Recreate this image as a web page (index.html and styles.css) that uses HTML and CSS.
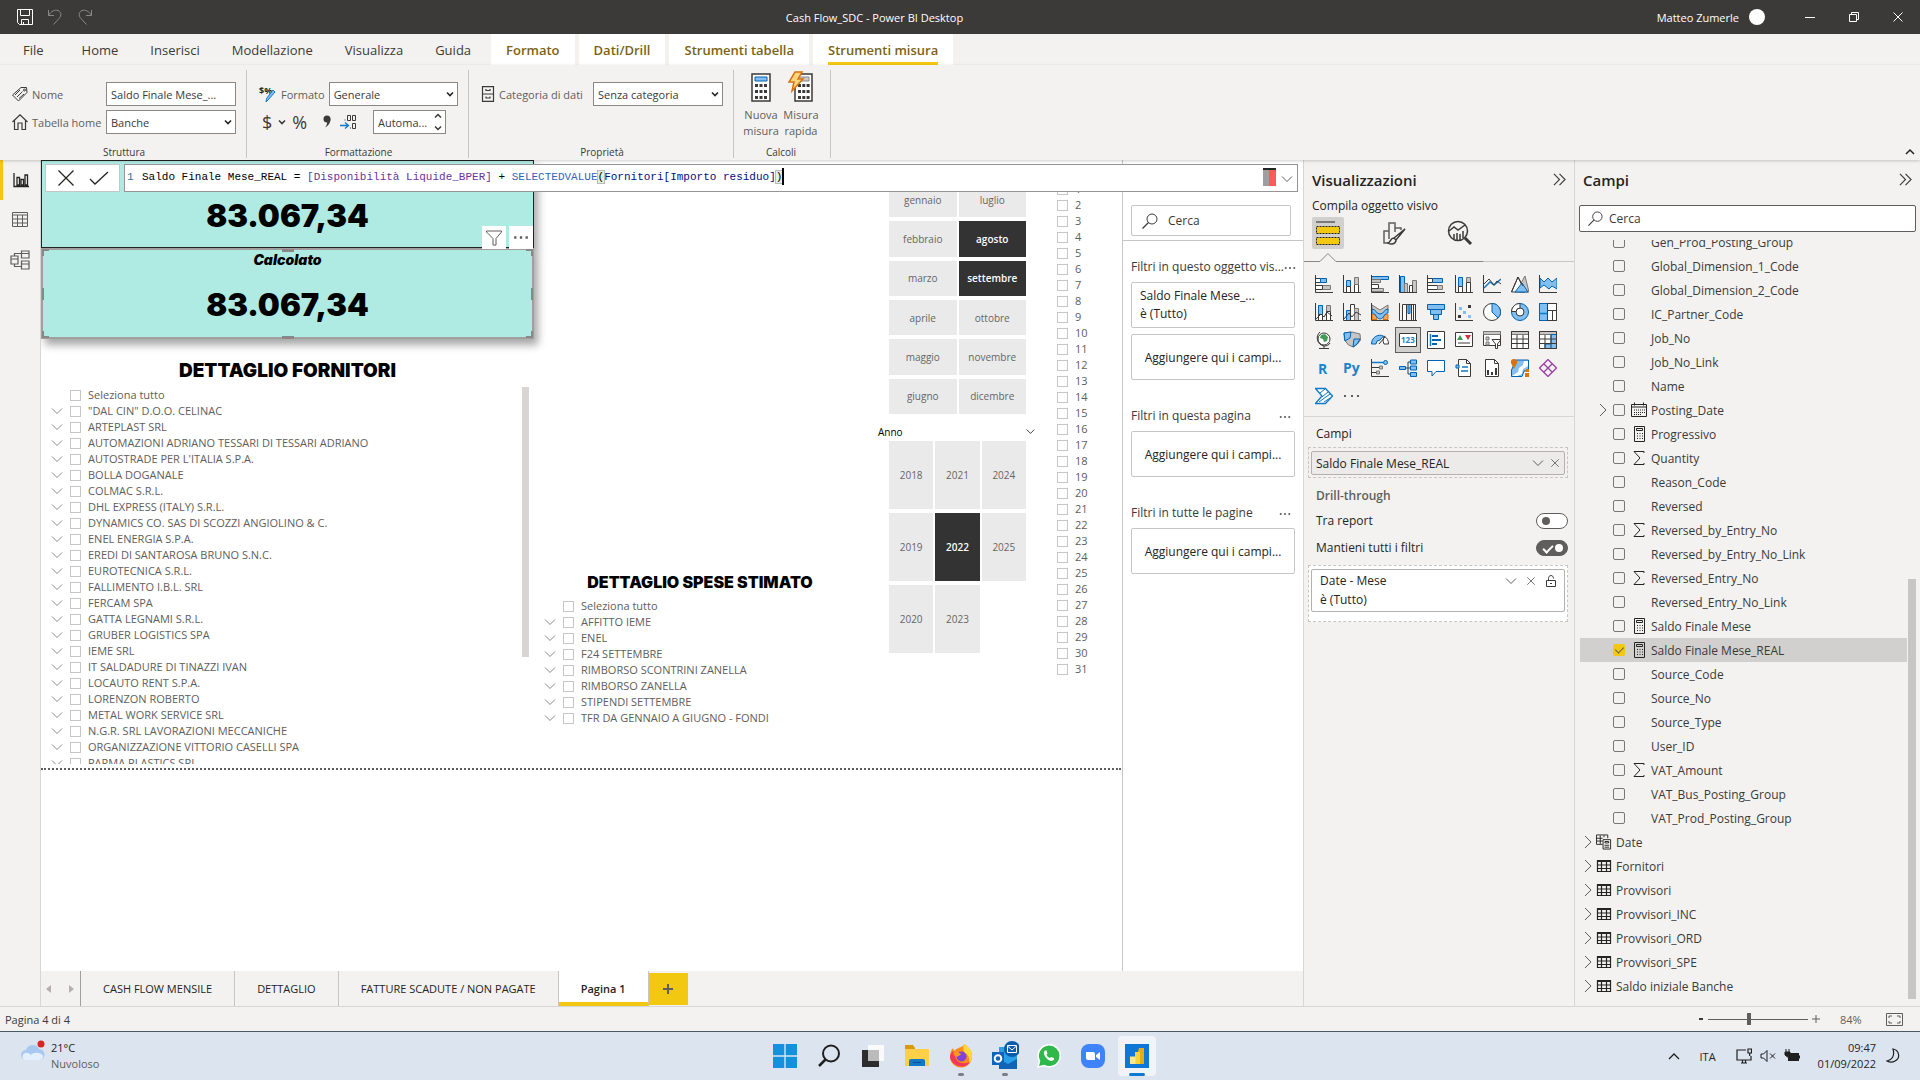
FILE: index.html
```html
<!DOCTYPE html>
<html lang="it">
<head>
<meta charset="utf-8">
<title>Cash Flow_SDC - Power BI Desktop</title>
<link rel="stylesheet" href="styles.css">
</head>
<body>
<svg class="defs" aria-hidden="true">
  <symbol id="down" viewBox="0 0 12 12"><path d="M1 3.500l5 5 5-5" fill="none" stroke="currentColor"/></symbol>
  <symbol id="right" viewBox="0 0 8 14"><path d="M1 1l6 6-6 6" fill="none" stroke="currentColor"/></symbol>
  <symbol id="caret" viewBox="0 0 8 8"><path d="M1 2.500l3 3 3-3" fill="none" stroke="currentColor" stroke-width="1.600"/></symbol>
  <symbol id="cross" viewBox="0 0 12 12"><path d="M1.500 1.500l9 9M10.500 1.500l-9 9" fill="none" stroke="currentColor"/></symbol>
  <symbol id="dots" viewBox="0 0 14 4"><path d="M1 1h2v2H1zM6 1h2v2H6zM11 1h2v2h-2z" fill="currentColor"/></symbol>
  <symbol id="find" viewBox="0 0 16 16"><circle cx="10" cy="6" r="5" fill="none" stroke="currentColor"/><path d="M6.500 9.500L.5 15.500" stroke="currentColor" stroke-width="1.200"/></symbol>
  <symbol id="fold" viewBox="0 0 14 14"><path d="M1 1l6 6-6 6M7 1l6 6-6 6" fill="none" stroke="currentColor" stroke-width="1.200"/></symbol>
  <symbol id="sum" viewBox="0 0 16 16"><path d="M13 3V1.500H3L9 8l-6 6.500h10V13" fill="none" stroke="#252423"/></symbol>
  <symbol id="calc" viewBox="0 0 16 16"><path d="M3.500.5h10v15h-10zM5.500 2.500h6v2h-6z" fill="none" stroke="#252423"/><path d="M6 7.500h6M6 10h6M6 12.500h6" stroke="#252423" stroke-dasharray="1 1.500"/></symbol>
  <symbol id="cal" viewBox="0 0 16 16"><path d="M.5 2.500h15v12H.5zM.5 5h15M3.500.5v3M12.500.5v3" fill="none" stroke="#252423"/><path d="M3 8h11M3 10.500h11M3 12.500h8" stroke="#252423" stroke-dasharray="1 1"/></symbol>
  <symbol id="table" viewBox="0 0 16 16"><path d="M1.500 2.500h13v11h-13zM1.500 7h13M1.500 10.500h13M5.500 4v10M10.500 4v10" fill="none" stroke="#252423" stroke-width="1.200"/><path d="M1 2h14v2H1z" fill="#252423"/></symbol>
</svg>

<header class="titlebar">
  <div class="quick">
    <button aria-label="Salva"><svg width="16" height="16" viewBox="0 0 16 16" fill="none" stroke="#fff"><path d="M.5.500h15v15h-13l-2-2zM3.500.500v6h9v-6M4.500 15.500v-5h7v5M6.500 13v2"/></svg></button>
    <button aria-label="Annulla"><svg width="16" height="16" viewBox="0 0 16 16" fill="none" stroke="#8a8886"><path d="M1.500 1v5.500H7M1.500 6.500C4 2 8 .5 11 1.500s4 5 1 8L6.500 15.500"/></svg></button>
    <button aria-label="Ripeti"><svg width="16" height="16" viewBox="0 0 16 16" fill="none" stroke="#8a8886"><path d="M14.500 1v5.500H9M14.500 6.500C12 2 8 .5 5 1.500s-4 5-1 8l5.500 6"/></svg></button>
  </div>
  <h1>Cash Flow_SDC - Power BI Desktop</h1>
  <div class="account">
    <span>Matteo Zumerle</span><i class="avatar"></i>
    <div class="window-buttons">
      <button aria-label="Riduci"><svg width="12" height="12" viewBox="0 0 12 12"><path d="M1 6.500h10" stroke="#fff"/></svg></button>
      <button aria-label="Ripristina"><svg width="12" height="12" viewBox="0 0 12 12" fill="none" stroke="#fff"><path d="M1.500 3.500h7v7h-7zM3.500 3.500v-2h7v7h-2"/></svg></button>
      <button aria-label="Chiudi"><svg width="12" height="12"><use href="#cross"/></svg></button>
    </div>
  </div>
</header>

<nav class="tabs">
  <button class="file">File</button><button>Home</button><button>Inserisci</button><button>Modellazione</button><button>Visualizza</button><button>Guida</button>
  <div class="contexts"><button>Formato</button><button>Dati/Drill</button><button>Strumenti tabella</button><button class="current"><span>Strumenti misura</span></button></div>
</nav>

<section class="ribbon">
  <div class="group g-structure">
    <div class="fields">
      <svg width="16" height="16" viewBox="0 0 16 16" fill="none" stroke="#3b3a38"><path d="M9 1.500h5.500l.5 5-8.500 8.500L.5 9zM3 9l5-5M5 11l5.500-5.500M7 12.500L12 8"/><circle cx="12.500" cy="4" r="1"/></svg>
      <label for="nome">Nome</label><input id="nome" type="text" value="Saldo Finale Mese_...">
      <svg width="16" height="16" viewBox="0 0 16 16" fill="none" stroke="#3b3a38" stroke-width="1.200"><path d="M.5 8L8 .8 15.500 8M2.500 6.500v9H6V9h4v6.500h3.500v-9"/></svg>
      <label for="tab">Tabella home</label><span class="pick"><select id="tab"><option>Banche</option></select><svg width="8" height="8"><use href="#caret"/></svg></span>
    </div>
    <h2>Struttura</h2>
  </div>
  <div class="group g-format">
    <div class="line">
      <svg width="18" height="18" viewBox="0 0 18 18"><text x="0" y="9" class="t-bold">$%</text><path d="M16 7l-7 8-2 2 .5-3.500L14 5z" fill="#83bef0" stroke="#0f78c8"/></svg>
      <label for="fmt">Formato</label><span class="pick"><select id="fmt"><option>Generale</option></select><svg width="8" height="8"><use href="#caret"/></svg></span>
    </div>
    <div class="line tools">
      <div class="money"><button aria-label="Valuta">$</button><button aria-label="Scegli valuta"><svg width="8" height="8"><use href="#caret"/></svg></button><button aria-label="Percentuale">%</button></div>
      <button aria-label="Separatore migliaia"><svg width="10" height="16" viewBox="0 0 10 16"><circle cx="5" cy="5" r="3.500" fill="#3b3a38"/><path d="M8.500 5c0 4-2 6.500-5.500 8.500C5 11 5.500 9 5 7z" fill="#3b3a38"/></svg></button>
      <button aria-label="Decimali"><svg width="17" height="16" viewBox="0 0 17 16" fill="none" stroke="#3b3a38"><path d="M4.500 6h1M7.500 1.500h3v5h-3zM12.500 1.500h3v5h-3zM12.500 9.500h3v5h-3zM10 14h1"/><path d="M0 11.500h8M5 8.500l3.500 3L5 14.500" stroke="#0f78c8" stroke-width="1.300"/></svg></button>
      <span class="pick spin"><input type="text" aria-label="Decimali" value="Automa..."><svg width="8" height="20" viewBox="0 0 8 20" fill="none" stroke="#3b3a38" stroke-width="1.500"><path d="M1 5.500l3-3 3 3M1 14.500l3 3 3-3"/></svg></span>
    </div>
    <h2>Formattazione</h2>
  </div>
  <div class="group g-props">
    <div class="line">
      <svg width="14" height="16" viewBox="0 0 14 16" fill="none" stroke="#3b3a38" stroke-width="1.200"><path d="M1.500.7h11v14.600h-11zM1.500 8h11M5 3v1.500h4V3M5 10.500V12h4v-1.500"/></svg>
      <label for="cat">Categoria di dati</label><span class="pick"><select id="cat"><option>Senza categoria</option></select><svg width="8" height="8"><use href="#caret"/></svg></span>
    </div>
    <h2>Proprietà</h2>
  </div>
  <div class="group g-calc">
    <div class="big-buttons">
      <button><svg width="28" height="32" viewBox="0 0 28 32"><path d="M5 3h18v27H5z" fill="#fff" stroke="#3b3a38" stroke-width="1.500"/><path d="M8 6h12v4H8z" fill="#83bef0" stroke="#0063b1"/><path d="M8 14.500h12M8 20.500h12M8 26.500h12" stroke="#3b3a38" stroke-width="3" stroke-dasharray="3 1.500"/></svg>Nuova<br>misura</button>
      <button><svg width="28" height="32" viewBox="0 0 28 32"><path d="M8 3h17v27H8z" fill="#fff" stroke="#3b3a38" stroke-width="1.500"/><path d="M11 6h11v4H11z" fill="#ccc" stroke="#888"/><path d="M11 14.500h12M11 20.500h12M11 26.500h12" stroke="#3b3a38" stroke-width="3" stroke-dasharray="3 1.300"/><path d="M8 1h7l-4 7h5L5 20l2-9H2z" fill="#ffd580" stroke="#d9730d" stroke-width="1.500"/></svg>Misura<br>rapida</button>
    </div>
    <h2>Calcoli</h2>
  </div>
  <button class="collapse" aria-label="Comprimi"><svg width="10" height="8" viewBox="0 0 10 8"><path d="M1 6l4-4 4 4" fill="none" stroke="#252423" stroke-width="1.500"/></svg></button>
</section>

<main class="work">
  <nav class="rail">
    <button class="on" aria-label="Report"><svg width="16" height="16" viewBox="0 0 16 16" fill="none" stroke="#252423" stroke-width="1.300"><path d="M1 1v13.500h15M4 13V5.500h2.500V13zM8 13V7.500h2.500V13zM12 13V3h2.500v10z"/></svg></button>
    <button aria-label="Dati"><svg width="18" height="16" viewBox="0 0 18 16" fill="none" stroke="#605e5c"><path d="M1.500.5h15v14h-15zM1.500 3h15M1.500 7h15M1.500 11h15M6.500 3v12M11.500 3v12"/></svg></button>
    <button aria-label="Modello"><svg width="20" height="20" viewBox="0 0 20 20" fill="none" stroke="#605e5c" stroke-width="1.200"><path d="M1 6h7v8H1zM1 9h7M11.500 1H19v7h-7.500zM11.500 3.500H19M11.500 11H19v8h-7.500zM11.500 14H19M4.500 6V3.500h7M4.500 14v2.500h7"/></svg></button>
  </nav>

  <section class="canvas">
    <div class="report">
      <div class="col-main">
        <article class="card"><strong>83.067,34</strong></article>
        <article class="card selected">
          <div class="visual-head"><button aria-label="Filtri"><svg width="18" height="18" viewBox="0 0 18 18"><path d="M1.500 2h15v1L11 9.500V16H8V9.500L1.500 3z" fill="none" stroke="#605e5c"/></svg></button><button aria-label="Altre opzioni"><svg width="16" height="5"><use href="#dots"/></svg></button></div>
          <h3>Calcolato</h3><strong>83.067,34</strong>
          <i class="h nw"></i><i class="h n"></i><i class="h ne"></i><i class="h w"></i><i class="h e"></i><i class="h sw"></i><i class="h s"></i><i class="h se"></i>
        </article>
        <h2 class="visual-title large">DETTAGLIO FORNITORI</h2>
        <div class="scroller">
          <ul class="checks">
            <li class="leaf"><label><input type="checkbox">Seleziona tutto</label></li>
            <li><svg><use href="#down"/></svg><label><input type="checkbox">"DAL CIN" D.O.O. CELINAC</label></li>
            <li><svg><use href="#down"/></svg><label><input type="checkbox">ARTEPLAST SRL</label></li>
            <li><svg><use href="#down"/></svg><label><input type="checkbox">AUTOMAZIONI ADRIANO TESSARI DI TESSARI ADRIANO</label></li>
            <li><svg><use href="#down"/></svg><label><input type="checkbox">AUTOSTRADE PER L'ITALIA S.P.A.</label></li>
            <li><svg><use href="#down"/></svg><label><input type="checkbox">BOLLA DOGANALE</label></li>
            <li><svg><use href="#down"/></svg><label><input type="checkbox">COLMAC S.R.L.</label></li>
            <li><svg><use href="#down"/></svg><label><input type="checkbox">DHL EXPRESS (ITALY) S.R.L.</label></li>
            <li><svg><use href="#down"/></svg><label><input type="checkbox">DYNAMICS CO. SAS DI SCOZZI ANGIOLINO &amp; C.</label></li>
            <li><svg><use href="#down"/></svg><label><input type="checkbox">ENEL ENERGIA S.P.A.</label></li>
            <li><svg><use href="#down"/></svg><label><input type="checkbox">EREDI DI SANTAROSA BRUNO S.N.C.</label></li>
            <li><svg><use href="#down"/></svg><label><input type="checkbox">EUROTECNICA S.R.L.</label></li>
            <li><svg><use href="#down"/></svg><label><input type="checkbox">FALLIMENTO I.B.L. SRL</label></li>
            <li><svg><use href="#down"/></svg><label><input type="checkbox">FERCAM SPA</label></li>
            <li><svg><use href="#down"/></svg><label><input type="checkbox">GATTA LEGNAMI S.R.L.</label></li>
            <li><svg><use href="#down"/></svg><label><input type="checkbox">GRUBER LOGISTICS SPA</label></li>
            <li><svg><use href="#down"/></svg><label><input type="checkbox">IEME SRL</label></li>
            <li><svg><use href="#down"/></svg><label><input type="checkbox">IT SALDADURE DI TINAZZI IVAN</label></li>
            <li><svg><use href="#down"/></svg><label><input type="checkbox">LOCAUTO RENT S.P.A.</label></li>
            <li><svg><use href="#down"/></svg><label><input type="checkbox">LORENZON ROBERTO</label></li>
            <li><svg><use href="#down"/></svg><label><input type="checkbox">METAL WORK SERVICE SRL</label></li>
            <li><svg><use href="#down"/></svg><label><input type="checkbox">N.G.R. SRL LAVORAZIONI MECCANICHE</label></li>
            <li><svg><use href="#down"/></svg><label><input type="checkbox">ORGANIZZAZIONE VITTORIO CASELLI SPA</label></li>
            <li><svg><use href="#down"/></svg><label><input type="checkbox">PARMA PLASTICS SRL</label></li>
          </ul>
          <i class="thumb"></i>
        </div>
      </div>
      <div class="col-costs">
        <h2 class="visual-title">DETTAGLIO SPESE STIMATO</h2>
        <ul class="checks">
          <li class="leaf"><label><input type="checkbox">Seleziona tutto</label></li>
          <li><svg><use href="#down"/></svg><label><input type="checkbox">AFFITTO IEME</label></li>
          <li><svg><use href="#down"/></svg><label><input type="checkbox">ENEL</label></li>
          <li><svg><use href="#down"/></svg><label><input type="checkbox">F24 SETTEMBRE</label></li>
          <li><svg><use href="#down"/></svg><label><input type="checkbox">RIMBORSO SCONTRINI ZANELLA</label></li>
          <li><svg><use href="#down"/></svg><label><input type="checkbox">RIMBORSO ZANELLA</label></li>
          <li><svg><use href="#down"/></svg><label><input type="checkbox">STIPENDI SETTEMBRE</label></li>
          <li><svg><use href="#down"/></svg><label><input type="checkbox">TFR DA GENNAIO A GIUGNO - FONDI</label></li>
        </ul>
      </div>
      <div class="col-slicers">
        <div class="months">
          <button>gennaio</button><button>luglio</button>
          <button>febbraio</button><button class="on">agosto</button>
          <button>marzo</button><button class="on">settembre</button>
          <button>aprile</button><button>ottobre</button>
          <button>maggio</button><button>novembre</button>
          <button>giugno</button><button>dicembre</button>
        </div>
        <div class="slicer-head"><span>Anno</span><svg width="9" height="9"><use href="#down"/></svg></div>
        <div class="years">
          <button>2018</button><button>2021</button><button>2024</button>
          <button>2019</button><button class="on">2022</button><button>2025</button>
          <button>2020</button><button>2023</button>
        </div>
      </div>
      <ul class="checks days">
        <li><label><input type="checkbox">1</label></li><li><label><input type="checkbox">2</label></li><li><label><input type="checkbox">3</label></li><li><label><input type="checkbox">4</label></li><li><label><input type="checkbox">5</label></li><li><label><input type="checkbox">6</label></li><li><label><input type="checkbox">7</label></li><li><label><input type="checkbox">8</label></li><li><label><input type="checkbox">9</label></li><li><label><input type="checkbox">10</label></li><li><label><input type="checkbox">11</label></li><li><label><input type="checkbox">12</label></li><li><label><input type="checkbox">13</label></li><li><label><input type="checkbox">14</label></li><li><label><input type="checkbox">15</label></li><li><label><input type="checkbox">16</label></li><li><label><input type="checkbox">17</label></li><li><label><input type="checkbox">18</label></li><li><label><input type="checkbox">19</label></li><li><label><input type="checkbox">20</label></li><li><label><input type="checkbox">21</label></li><li><label><input type="checkbox">22</label></li><li><label><input type="checkbox">23</label></li><li><label><input type="checkbox">24</label></li><li><label><input type="checkbox">25</label></li><li><label><input type="checkbox">26</label></li><li><label><input type="checkbox">27</label></li><li><label><input type="checkbox">28</label></li><li><label><input type="checkbox">29</label></li><li><label><input type="checkbox">30</label></li><li><label><input type="checkbox">31</label></li>
      </ul>
    </div>
  </section>

  <aside class="filters">
    <div class="filter-search"><label class="search"><svg width="16" height="16"><use href="#find"/></svg><input type="text" value="Cerca" aria-label="Cerca"></label></div>
    <h3><span>Filtri in questo oggetto vis...</span><svg width="12" height="4"><use href="#dots"/></svg></h3>
    <div class="filter-card">Saldo Finale Mese_...<br>è (Tutto)</div>
    <div class="drop">Aggiungere qui i campi...</div>
    <h3><span>Filtri in questa pagina</span><svg width="12" height="4"><use href="#dots"/></svg></h3>
    <div class="drop">Aggiungere qui i campi...</div>
    <h3><span>Filtri in tutte le pagine</span><svg width="12" height="4"><use href="#dots"/></svg></h3>
    <div class="drop">Aggiungere qui i campi...</div>
  </aside>

  <aside class="viz">
    <div class="pane-head"><h2>Visualizzazioni</h2><button aria-label="Comprimi"><svg width="13" height="13"><use href="#fold"/></svg></button></div>
    <p class="sub">Compila oggetto visivo</p>
    <div class="modes">
      <button class="on" aria-label="Compila"><svg width="26" height="26" viewBox="0 0 26 26"><path d="M1 2h19" stroke="#252423"/><path d="M1.500 6.500h23v7h-23zM1.500 17.500h23v7h-23z" fill="#f2c811" stroke="#252423" stroke-dasharray="2 1"/></svg></button>
      <button aria-label="Formato"><svg width="26" height="26" viewBox="0 0 26 26" fill="none" stroke="#605e5c" stroke-width="1.500"><path d="M7 23H3V11h5M8 19V3h6v9M14 8h6v2"/><path d="M24 9L13 18l2 2zM13 18c-4 0-3 4-6 5 3 2 8 1 8-3" stroke="#3b3a38" fill="#f3f2f1"/></svg></button>
      <button aria-label="Analisi"><svg width="26" height="26" viewBox="0 0 26 26" fill="none" stroke="#3b3a38" stroke-width="1.500"><circle cx="11" cy="11" r="9.500"/><path d="M2 11l5-4 4 3 7-5M7 19v-5M10 20v-7M13 20v-6M16 18v-7"/><path d="M18 18l6 6" stroke-width="3"/></svg></button>
    </div>
    <svg class="pointer" viewBox="0 0 271 9" preserveAspectRatio="none"><path d="M0 8.500h16l8-8 8 8h149" fill="none" stroke="#8a8886"/><path d="M180 8.500h91" stroke="#c8c6c4"/></svg>
    <div class="gallery">
      <button><svg viewBox="0 0 18 18"><path class="g" d="M7.500 10.500h8v4h-8z"/><path class="w" d="M.5 3.500h5v4h-5zM.5 10.500h7v4h-7z"/><path class="b" d="M5.500 3.500h6v4h-6z"/><path class="k" d="M.5 0v17.500H18"/></svg></button>
      <button><svg viewBox="0 0 18 18"><path class="b" d="M3.500 5.500h4v6h-4z"/><path class="w" d="M3.500 11.500h4v6h-4zM11.500 9.500h4v8h-4z"/><path class="g" d="M11.500 2.500h4v7h-4z"/><path class="k" d="M.5 0v17.500H18"/></svg></button>
      <button><svg viewBox="0 0 18 18"><path class="b" d="M.5 1.500h17v3H.5z"/><path class="g" d="M.5 4.500h9v3h-9zM.5 13.500h12v3H.5z"/><path class="w" d="M.5 9.500h7v4h-7z"/><path class="k" d="M.5 0v17.500H18"/></svg></button>
      <button><svg viewBox="0 0 18 18"><path class="b" d="M1.500 1.500h4v16h-4z"/><path class="g" d="M5.500 8.500h3v9h-3zM13.500 5.500h4v12h-4z"/><path class="w" d="M10.500 10.500h3v7h-3z"/><path class="k" d="M.5 0v17.500H18"/></svg></button>
      <button><svg viewBox="0 0 18 18"><path class="b" d="M5.500 3.500h10v4h-10z"/><path class="w" d="M.5 3.500h5v4h-5zM.5 10.500h10v4H.5z"/><path class="g" d="M10.500 10.500h5v4h-5z"/><path class="k" d="M.5 0v17.500H18"/></svg></button>
      <button><svg viewBox="0 0 18 18"><path class="b" d="M3.500 2.500h4v9h-4z"/><path class="g" d="M11.500 2.500h4v5h-4z"/><path class="w" d="M3.500 11.500h4v6h-4zM11.500 7.500h4v10h-4z"/><path class="k" d="M.5 0v17.500H18"/></svg></button>
      <button><svg viewBox="0 0 18 18"><path class="bl" d="M1 13l6-6 4 3 7-6"/><path class="k" d="M.5 0v17.500H18M1 9l5-5 5 6 3-4 4 3"/></svg></button>
      <button><svg viewBox="0 0 18 18"><path class="g" d="M9 10l5-9 4 16H9z"/><path class="w" d="M.5 17L7 2l7 15z"/><path class="b" d="M4 17l7-9 6 9z"/><path class="k" d="M.5 17L7 2l5 9"/></svg></button>
      <button><svg viewBox="0 0 18 18"><path class="b" d="M1 3l4 4 4-4 4 4 5-4v11l-5-3-3 3-5-4-4 3z"/><path class="k" d="M.5 0v17.500H18"/></svg></button>

      <button><svg viewBox="0 0 18 18"><path class="b" d="M3.500 2.500h4v9h-4z"/><path class="g" d="M11.500 2.500h4v6h-4z"/><path class="w" d="M3.500 11.500h4v6h-4zM11.500 8.500h4v9h-4z"/><path class="k" d="M.5 0v17.500H18M1 16l5-5 3 3 3-5 5 4"/></svg></button>
      <button><svg viewBox="0 0 18 18"><path class="b" d="M3.500 7.500h4v10h-4z"/><path class="w" d="M7.500 1.500h4v16h-4z"/><path class="g" d="M11.500 5.500h4v12h-4z"/><path class="k" d="M.5 0v17.500H18M1 16l5-6 3 4 4-5 5 3"/></svg></button>
      <button><svg viewBox="0 0 18 18"><path class="o" d="M1 11.500h5v5H1zM12 11.500h5v5h-5z"/><path class="g" d="M1 2l8 5 8-5v5l-8 5-8-5z"/><path class="b" d="M1 6c4 0 4 5 8 5s4-5 8-5v4c-4 0-4 6-8 6s-4-6-8-6z"/><path class="k" d="M.5 0v17.500H18"/></svg></button>
      <button><svg viewBox="0 0 18 18"><path class="w" d="M3.500 1.500h4v16h-4zM12.500 1.500h4v16h-4z"/><path class="b" d="M9 1.500h2v9H9z"/><path class="k" d="M.5 0v17.500H18M7.500 1.500h9M14.500 2v15"/></svg></button>
      <button><svg viewBox="0 0 18 18"><path class="b" d="M.5 1.500h17v5H.5zM3.500 6.500h11v5h-11zM6.500 11.500h5v5h-5z"/></svg></button>
      <button><svg viewBox="0 0 18 18"><path class="fb" d="M4 4h3v3H4zM8 8h3v3H8zM13 12h3v3h-3z"/><path class="fk" d="M13 2h3v3h-3zM3 12h3v3H3z"/><path class="k" d="M.5 0v17.500H18"/></svg></button>
      <button><svg viewBox="0 0 18 18"><circle class="w" cx="9" cy="9" r="8.500"/><path class="b" d="M9 .5a8.500 8.500 0 0 1 6 14.500L9 9z"/></svg></button>
      <button><svg viewBox="0 0 18 18"><circle class="b" cx="9" cy="9" r="8.500"/><circle class="w" cx="9" cy="9" r="4"/><path class="w" d="M9 .5V5a4 4 0 0 0-4 3.500H.5C1 4 4 .5 9 .5z"/></svg></button>
      <button><svg viewBox="0 0 18 18"><path class="w" d="M.5.500h17v17H.5z"/><path class="b" d="M.5.500h8v17h-8z"/><path class="k" d="M8.500.500h9v17h-9zM8.500 7.500h9M13.500 7.500v10"/><path class="bl" d="M.5 10.500h8"/></svg></button>

      <button><svg viewBox="0 0 18 18"><circle class="w" cx="9" cy="8" r="6"/><path d="M6 4l4-1 3 3-1 4-3 1-1-3-3-1z" fill="#3f9b55"/><path class="k" d="M5 1C0 5 2 14 9 15c3 0 5-1 6-3M9 15v2.500M4 17.500h10"/></svg></button>
      <button><svg viewBox="0 0 18 18"><path class="g" d="M1 2l8-1 8 2 .5 6-3 4-4 3-5-2-4-5z"/><path class="b" d="M1 2l7-1-1 6-5 3zM11 8l6 0-3 5-4 3z"/></svg></button>
      <button><svg viewBox="0 0 18 18"><path class="b" d="M.5 13a8.500 8.500 0 0 1 12-8L9 9a4 4 0 0 0-4 4z"/><path class="w" d="M13 5a9 9 0 0 1 4.500 8H13l-1-3z"/><path class="k" d="M8 13l6-7"/></svg></button>
      <button class="on"><svg viewBox="0 0 18 18"><path class="w" d="M.5 2.500h17v13H.5z"/><text x="2" y="12" class="t-blue small">123</text></svg></button>
      <button><svg viewBox="0 0 18 18"><path class="w" d="M.5.500h17v17H.5z"/><path class="bl" d="M3.500 3v12" /><path d="M5 5h6M5 9h9M5 13h5" stroke="#0063b1" stroke-width="2"/></svg></button>
      <button><svg viewBox="0 0 18 18"><path class="w" d="M.5 1.500h17v14H.5z"/><path d="M2 9l3-5 3 5z" fill="#3f9b55"/><path d="M10 4h6l-3 5z" fill="#d13438"/><path class="k" d="M3 12h12"/></svg></button>
      <button><svg viewBox="0 0 18 18"><path class="w" d="M.5.500h17v14H.5z"/><path class="g" d="M.5.500h17v3H.5zM3 6h3v3H3zM3 11h3v3H3z"/><path class="w" d="M9 8.500h9L14.500 13v4.500h-2V13z"/></svg></button>
      <button><svg viewBox="0 0 18 18"><path class="w" d="M.5.500h17v17H.5z"/><path class="g" d="M.5.500h17v3H.5z"/><path class="k" d="M.5.500h17v17H.5zM.5 8h17M.5 12.500h17M6 4v13M12 4v13"/></svg></button>
      <button><svg viewBox="0 0 18 18"><path class="w" d="M.5.500h17v17H.5z"/><path class="g" d="M.5.500h17v3H.5z"/><path class="b" d="M12 3.500h5.500v14H6V13h6z"/><path class="k" d="M.5.500h17v17H.5zM.5 8h17M.5 12.500h17M6 4v13M12 4v13"/></svg></button>

      <button><svg viewBox="0 0 18 18"><text x="3" y="15" class="t-blue">R</text></svg></button>
      <button><svg viewBox="0 0 18 18"><text x="0" y="14" class="t-blue">Py</text></svg></button>
      <button><svg viewBox="0 0 18 18"><circle class="b" cx="14.500" cy="3.500" r="2"/><path class="bl" d="M1 3.500h11"/><path class="g" d="M8.500 7h3v3h-3zM5.500 12h3v3h-3z"/><path class="k" d="M.5 0v17.500H18M1 8.500h7M1 13.500h4"/></svg></button>
      <button><svg viewBox="0 0 18 18"><path class="b" d="M.5 7.500h6v3h-6zM11.500 1h6v4h-6zM11.500 7h6v4h-6zM11.500 13.500h6v4h-6z"/><path class="k" d="M7 9h4M9 3v12M9 3h2M9 15h2"/></svg></button>
      <button><svg viewBox="0 0 18 18"><path d="M.5 1.500h17v11H9l-4 4.500v-4.500H.500z" fill="#fff" stroke="#0063b1"/></svg></button>
      <button><svg viewBox="0 0 18 18"><path class="w" d="M3.500.500h8l4 4v13h-12z"/><path class="k" d="M11.500.500v4h4"/><path class="b" d="M1 6h3v3H1z"/><path class="bl" d="M7 8h6M6 12h7"/></svg></button>
      <button><svg viewBox="0 0 18 18"><path class="w" d="M2.500.500h9l4 4v13h-13z"/><path class="k" d="M11.500.500v4h4"/><path class="fk" d="M4 11h2v5H4zM8 13h2v3H8zM12 9h2v7h-2z"/></svg></button>
      <button><svg viewBox="0 0 18 18"><path class="b" d="M5 1h12.500v11H13l-2 5.500H.5V11z"/><path d="M17 2h-4l-1 4-4 3-1 4-6 4h5l5-2 1-5 5-3z" fill="#fff"/><path d="M3 0a3 3 0 0 1 3 4L3 10 0 4a3 3 0 0 1 3-4zM14 14h4v4h-4zM15 10h3v3h-3z" fill="#d9730d"/></svg></button>
      <button><svg viewBox="0 0 18 18" fill="none" stroke="#9a3fa5" stroke-width="1.300"><path d="M9 .5L17.500 9 9 17.500.5 9zM4.700 4.700l8.600 8.600M13.300 4.700l-8.600 8.600"/></svg></button>

      <button><svg viewBox="0 0 18 18"><path d="M.5 1.500h10L17.500 9l-7 7.500H.5L7 9z" fill="#fff" stroke="#0f78c8" stroke-width="1.300"/><path d="M5 6l5-4M7 10l6-5M4 15L15 7M9 15l6-4" stroke="#0f78c8"/></svg></button>
      <button aria-label="Altro"><svg viewBox="0 0 18 18"><path d="M1 8h2v2H1zM8 8h2v2H8zM14 8h2v2h-2z" fill="#605e5c"/></svg></button>
    </div>
    <div class="wells">
      <h4>Campi</h4>
      <div class="well"><div class="pill">Saldo Finale Mese_REAL<span><svg width="12" height="12"><use href="#down"/></svg><svg width="10" height="10"><use href="#cross"/></svg></span></div></div>
      <h4 class="strong">Drill-through</h4>
      <label class="toggle">Tra report<input type="checkbox"></label>
      <label class="toggle">Mantieni tutti i filtri<input type="checkbox" checked></label>
      <div class="well tall"><div class="drill"><div>Date - Mese<span><svg width="12" height="12"><use href="#down"/></svg><svg width="10" height="10"><use href="#cross"/></svg><svg width="12" height="12" viewBox="0 0 12 12" fill="none" stroke="#3b3a38"><path d="M1.500 5.500h9v6h-9zM3.500 5.500v-2c0-4 5-4 5 0M5 8.500h2"/></svg></span></div>è (Tutto)</div></div>
    </div>
  </aside>

  <aside class="fieldpane">
    <div class="pane-head"><h2>Campi</h2><button aria-label="Comprimi"><svg width="13" height="13"><use href="#fold"/></svg></button></div>
    <label class="search dark"><svg width="15" height="15"><use href="#find"/></svg><input type="text" value="Cerca" aria-label="Cerca campi"></label>
    <div class="tree">
      <ul>
        <li><i></i><label><input type="checkbox"><b></b>Gen_Prod_Posting_Group</label></li>
        <li><i></i><label><input type="checkbox"><b></b>Global_Dimension_1_Code</label></li>
        <li><i></i><label><input type="checkbox"><b></b>Global_Dimension_2_Code</label></li>
        <li><i></i><label><input type="checkbox"><b></b>IC_Partner_Code</label></li>
        <li><i></i><label><input type="checkbox"><b></b>Job_No</label></li>
        <li><i></i><label><input type="checkbox"><b></b>Job_No_Link</label></li>
        <li><i></i><label><input type="checkbox"><b></b>Name</label></li>
        <li><i><svg width="8" height="14"><use href="#right"/></svg></i><label><input type="checkbox"><b><svg><use href="#cal"/></svg></b>Posting_Date</label></li>
        <li><i></i><label><input type="checkbox"><b><svg><use href="#calc"/></svg></b>Progressivo</label></li>
        <li><i></i><label><input type="checkbox"><b><svg><use href="#sum"/></svg></b>Quantity</label></li>
        <li><i></i><label><input type="checkbox"><b></b>Reason_Code</label></li>
        <li><i></i><label><input type="checkbox"><b></b>Reversed</label></li>
        <li><i></i><label><input type="checkbox"><b><svg><use href="#sum"/></svg></b>Reversed_by_Entry_No</label></li>
        <li><i></i><label><input type="checkbox"><b></b>Reversed_by_Entry_No_Link</label></li>
        <li><i></i><label><input type="checkbox"><b><svg><use href="#sum"/></svg></b>Reversed_Entry_No</label></li>
        <li><i></i><label><input type="checkbox"><b></b>Reversed_Entry_No_Link</label></li>
        <li><i></i><label><input type="checkbox"><b><svg><use href="#calc"/></svg></b>Saldo Finale Mese</label></li>
        <li class="on"><i></i><label><input type="checkbox" checked><b><svg><use href="#calc"/></svg></b>Saldo Finale Mese_REAL</label></li>
        <li><i></i><label><input type="checkbox"><b></b>Source_Code</label></li>
        <li><i></i><label><input type="checkbox"><b></b>Source_No</label></li>
        <li><i></i><label><input type="checkbox"><b></b>Source_Type</label></li>
        <li><i></i><label><input type="checkbox"><b></b>User_ID</label></li>
        <li><i></i><label><input type="checkbox"><b><svg><use href="#sum"/></svg></b>VAT_Amount</label></li>
        <li><i></i><label><input type="checkbox"><b></b>VAT_Bus_Posting_Group</label></li>
        <li><i></i><label><input type="checkbox"><b></b>VAT_Prod_Posting_Group</label></li>
        <li class="tbl"><svg width="8" height="14"><use href="#right"/></svg><svg width="16" height="16" viewBox="0 0 17 16" fill="none" stroke="#252423"><path d="M7 10.500H.5v-10h12V4M.5 4H7M.5 7H7M4.500 1v9M8.500 1v2"/><path d="M7.500 5.500h8v10h-8zM9.500 7.500h4v1.500h-4zM9 11.500h5M9 13.500h5"/></svg>Date</li>
        <li class="tbl"><svg width="8" height="14"><use href="#right"/></svg><svg width="16" height="16"><use href="#table"/></svg>Fornitori</li>
        <li class="tbl"><svg width="8" height="14"><use href="#right"/></svg><svg width="16" height="16"><use href="#table"/></svg>Provvisori</li>
        <li class="tbl"><svg width="8" height="14"><use href="#right"/></svg><svg width="16" height="16"><use href="#table"/></svg>Provvisori_INC</li>
        <li class="tbl"><svg width="8" height="14"><use href="#right"/></svg><svg width="16" height="16"><use href="#table"/></svg>Provvisori_ORD</li>
        <li class="tbl"><svg width="8" height="14"><use href="#right"/></svg><svg width="16" height="16"><use href="#table"/></svg>Provvisori_SPE</li>
        <li class="tbl"><svg width="8" height="14"><use href="#right"/></svg><svg width="16" height="16"><use href="#table"/></svg>Saldo iniziale Banche</li>
      </ul>
      <i class="thumb"></i>
    </div>
  </aside>

  <nav class="pages">
    <div class="arrows"><button aria-label="Precedente"><svg width="6" height="8"><path d="M5 0v8L0 4z" fill="#b3b0ad"/></svg></button><button aria-label="Successiva"><svg width="6" height="8"><path d="M1 0v8l5-4z" fill="#b3b0ad"/></svg></button></div>
    <button>CASH FLOW MENSILE</button><button>DETTAGLIO</button><button>FATTURE SCADUTE / NON PAGATE</button><button class="on">Pagina 1</button>
    <button class="add" aria-label="Nuova pagina"><svg width="12" height="12"><path d="M6 1v10M1 6h10" stroke="#605e5c" stroke-width="2"/></svg></button>
  </nav>

  <div class="formula">
    <div class="confirm"><button aria-label="Annulla"><svg width="18" height="18" viewBox="0 0 18 18"><path d="M1.500 1.500l15 15M16.500 1.500l-15 15" stroke="#252423" stroke-width="1.300"/></svg></button><button aria-label="Conferma"><svg width="20" height="18" viewBox="0 0 20 18"><path d="M1 10l5 5L19 3" fill="none" stroke="#252423" stroke-width="1.300"/></svg></button></div>
    <div class="editor"><span class="num">1</span><code>Saldo Finale Mese_REAL = <span class="meas">[Disponibilità Liquide_BPER]</span> + <span class="fn">SELECTEDVALUE</span><span class="paren">(</span><span class="col">Fornitori[Importo residuo]</span><span class="paren">)</span></code><i class="cursor"></i>
      <i class="minimap"></i><button aria-label="Espandi"><svg width="12" height="12"><use href="#down"/></svg></button></div>
  </div>
</main>

<footer class="status">
  <span>Pagina 4 di 4</span>
  <div class="zoom"><svg width="6" height="4"><path d="M1 2h4" stroke="#3b3a38" stroke-width="2"/></svg><input type="range" min="10" max="200" value="88" aria-label="Zoom"><svg width="8" height="8"><path d="M4 0v8M0 4h8" stroke="#605e5c"/></svg><span>84%</span>
  <button aria-label="Adatta alla pagina"><svg width="17" height="13" viewBox="0 0 17 13" fill="none" stroke="#605e5c"><path d="M.5.500h16v12H.5zM3 5V3h3M11 3h3v2M14 8v2h-3M6 10H3V8"/></svg></button></div>
</footer>

<footer class="taskbar">
  <div class="weather"><svg width="26" height="24" viewBox="0 0 26 24"><path d="M6 20a5 5 0 0 1 0-10 7 7 0 0 1 13-1 5.500 5.500 0 0 1 0 11z" fill="#a9c8ef"/><path d="M4 20a4 4 0 0 1 1-7c3-1 5 1 6 2 2-3 10-3 12 1 0 3-2 4-4 4z" fill="#e3effc"/><circle cx="21" cy="4" r="3.500" fill="#d1281f"/></svg><p>21°C<br><small>Nuvoloso</small></p></div>
  <div class="apps">
    <button aria-label="Start"><svg width="24" height="24" viewBox="0 0 24 24"><path d="M0 0h11.300v11.300H0zM12.700 0H24v11.300H12.700zM0 12.700h11.300V24H0zM12.700 12.700H24V24H12.700z" fill="#1490df"/></svg></button>
    <button aria-label="Cerca"><svg width="24" height="24" viewBox="0 0 24 24" fill="none" stroke="#1f1f1f"><circle cx="14" cy="9.500" r="8" stroke-width="2"/><path d="M8.500 15.500L2 22" stroke-width="2.500"/></svg></button>
    <button aria-label="Visualizzazione attività"><svg width="24" height="24" viewBox="0 0 24 24"><path d="M7 1h16v16H7z" fill="#fafafa"/><path d="M1 6h17v17H1z" fill="#2d2d2d"/><path d="M7 6h11v11H7z" fill="#bbb"/></svg></button>
    <button aria-label="Esplora file"><svg width="26" height="24" viewBox="0 0 26 24"><path d="M1 1h8l2 3v6H1z" fill="#d99a0a"/><path d="M1 5h23a1 1 0 0 1 1 1v15a1 1 0 0 1-1 1H1z" fill="#ffcf48"/><path d="M5 22v-5a2 2 0 0 1 2-2h12a2 2 0 0 1 2 2v5z" fill="#1377c8"/><path d="M9 18h8v1H9z" fill="#0c4f8c"/></svg></button>
    <button aria-label="Firefox" class="run"><svg width="24" height="24" viewBox="0 0 24 24"><path d="M12 3c3-1 3-3 3-3 3 2 8 6 8 12a11 11 0 0 1-22 1C1 9 2 6 4 4l1 3c2-2 4-3 7-4z" fill="#ff8a1c"/><path d="M15 0c3 2 8 6 8 12 0 3-1 5-3 7 1-7-2-9-5-11-1-2-1-5 0-8z" fill="#ffd83a"/><path d="M1 13c1 8 14 14 20 5-6 3-14 1-15-6-2-1-2-3-1-5-3 1-4 4-4 6z" fill="#f2385a"/><circle cx="12.500" cy="12.500" r="5" fill="#8043d8"/><path d="M5 9c3-2 6 0 7 1-1 2-4 2-4 3z" fill="#ff9a1f"/></svg></button>
    <button aria-label="Outlook" class="run"><svg width="28" height="30" viewBox="0 0 28 30"><path d="M8 6h15l3 7v15H8z" fill="#28a0e8"/><path d="M8 18l9 5 9-5v10H8z" fill="#1262b5"/><path d="M1 11h12v13H1z" fill="#0f64bd"/><circle cx="7" cy="17.500" r="3.300" fill="none" stroke="#fff" stroke-width="2"/><circle cx="21" cy="8" r="8" fill="#0b5cab"/><path d="M16.500 4.500h9v7h-9zM16.500 5l4.500 4 4.500-4" fill="none" stroke="#fff"/></svg></button>
    <button aria-label="WhatsApp"><svg width="24" height="24" viewBox="0 0 24 24"><path d="M1 23l1.500-6A11 11 0 1 1 7 21.500z" fill="#2fb94a" stroke="#fff" stroke-width="1.500"/><path d="M8 6.500c-3 3 1 9 6 10.500 2 0 3.500-1 3-3l-3-1-1 1c-1.500-.5-3-2-3.500-3.500l1-1L9.500 6.500z" fill="#fff"/></svg></button>
    <button aria-label="Zoom"><svg width="24" height="24" viewBox="0 0 24 24"><rect width="24" height="24" rx="8" fill="#3f83fa"/><path d="M5 8h7a2 2 0 0 1 2 2v6H7a2 2 0 0 1-2-2zM15 11l4-3v8l-4-3z" fill="#fff"/></svg></button>
    <button aria-label="Power BI" class="run active"><svg width="24" height="24" viewBox="0 0 24 24"><path d="M0 0h24v24H0z" fill="#0f78d4"/><path d="M14 4h5v16h-9z" fill="#e6ad10"/><path d="M10 8h5v12h-5z" fill="#f6d23c"/><path d="M5 12.500h5.500V20H5z" fill="#fbe88a"/></svg></button>
  </div>
  <div class="tray">
    <svg width="12" height="8" viewBox="0 0 12 8"><path d="M1 7l5-5 5 5" fill="none" stroke="#1f1f1f" stroke-width="1.300"/></svg>
    <span class="lang">ITA</span>
    <svg width="16" height="16" viewBox="0 0 16 16" fill="none" stroke="#1f1f1f" stroke-width="1.200"><path d="M10 2H1v10h14V8M5 15h6M6.500 12v3M9.500 12v3M12 1h3.500v4H12zM13.700 5v3"/></svg>
    <svg width="16" height="14" viewBox="0 0 16 14" fill="none" stroke="#1f1f1f"><path d="M1 5h2.500L7 1.500v11L3.500 9H1zM10 4.500l5 5M15 4.500l-5 5"/></svg>
    <svg width="17" height="14" viewBox="0 0 17 14"><path d="M6 4h9v8H4V8z" fill="#1f1f1f"/><path d="M15.500 6.500v3M2 0v3M5 0v3M1 3h5v3L3.500 8 1 6z" stroke="#1f1f1f" fill="#1f1f1f"/></svg>
    <time>09:47<br>01/09/2022</time>
    <svg width="14" height="16" viewBox="0 0 14 16"><path d="M7 1c6 1 8 9 2 12-3 2-6 1-8 0 5-1 8-5 6-12z" fill="none" stroke="#1f1f1f" stroke-width="1.200"/></svg>
  </div>
</footer>
</body>
</html>
```
FILE: styles.css
```css
* { box-sizing: border-box; }
body {
  margin: 0; height: 100vh; overflow: hidden;
  display: grid; grid-template-rows: 34px 31px 95px minmax(0, 1fr) 25px 48px;
  font-family: "Open Sans", "Noto Sans", sans-serif; font-size: 12px; color: #252423; background: #f3f2f1;
}
.defs { position: absolute; width: 0; height: 0; }
h1, h2, h3, h4, p, ul { margin: 0; padding: 0; font-weight: 400; }
ul { list-style: none; }
i { font-style: normal; }
svg { display: block; flex: none; }
button { font: inherit; color: inherit; background: none; border: 0; padding: 0; margin: 0; display: flex; align-items: center; justify-content: center; }
input, select { font: inherit; color: inherit; margin: 0; min-width: 0; }
input[type="checkbox"] { appearance: none; flex: none; background: #fff; border: 1px solid #c8c6c4; }

/* Title bar */
.titlebar { display: grid; grid-template-columns: 1fr auto 1fr; align-items: center; background: #3b3a38; color: #fff; font-size: 11px; }
.quick { display: flex; gap: 14px; padding-left: 17px; }
.titlebar h1 { font-size: 11px; width: 355px; text-align: center; }
.titlebar { grid-template-columns: 697px auto 1fr; }
.account { display: flex; justify-content: flex-end; align-items: center; gap: 10px; padding-right: 16px; }
.avatar { width: 16px; height: 16px; border-radius: 8px; background: #fff; }
.window-buttons { display: flex; gap: 32px; margin-left: 29px; }

/* Ribbon tabs */
.tabs { display: flex; font-size: 13px; padding-left: 7px; }
.tabs button { padding: 0 16px; color: #3b3a38; white-space: nowrap; }
.tabs .file { margin-right: 6px; }
.contexts { display: flex; gap: 4px; margin-left: 4px; }
.tabs .contexts button { background: #fff; color: #7a6414; font-weight: 600; padding: 0 15px; }
.tabs .current span { display: flex; align-items: center; height: 31px; border-bottom: 3px solid #f2c811; padding-top: 3px; }

/* Ribbon */
.ribbon { display: flex; position: relative; z-index: 3; font-size: 11px; color: #605e5c; padding-top: 5px; background: #f3f2f1; box-shadow: 0 1px 3px rgba(0,0,0,.2); }
.group { display: flex; flex-direction: column; height: 88px; border-right: 1px solid #c8c6c4; padding: 12px 10px 0 12px; gap: 4px; }
.group h2 { margin-top: auto; font-size: 10px; line-height: 12px; text-align: center; color: #3b3a38; }
.g-structure { width: 247px; }
.g-format { width: 222px; }
.g-props { width: 265px; }
.g-calc { width: 97px; padding: 0 9px 0 7px; }
.fields { display: grid; grid-template-columns: 20px 74px 130px; gap: 4px 0; align-items: center; }
.line { display: flex; align-items: center; height: 24px; gap: 4px; }
.line label { flex: 1; white-space: nowrap; }
.fields label { white-space: nowrap; }
.pick { display: grid; width: 130px; align-items: center; }
.pick > * { grid-area: 1 / 1; }
.pick svg { justify-self: end; margin-right: 4px; color: #252423; }
.fields input, .pick select, .pick input { appearance: none; width: 100%; height: 24px; border: 1px solid #8a8886; border-radius: 0; background: #fff; padding: 0 4px; color: #3b3a38; }
.tools { gap: 8px; padding-left: 3px; }
.money { display: flex; align-items: center; gap: 6px; width: 52px; font-size: 18px; color: #3b3a38; }
.tools .spin { width: 73px; margin-left: auto; margin-right: 12px; }
.big-buttons { display: grid; grid-template-columns: 40px 40px; }
.big-buttons button { flex-direction: column; line-height: 16px; gap: 4px; padding-top: 1px; }
.collapse { margin: auto 5px 4px auto; }

/* Work area */
.work { position: relative; display: grid; min-height: 0; grid-template-columns: 41px minmax(0, 1fr) 181px 271px 346px; grid-template-rows: minmax(0, 1fr) 35px; border-bottom: 1px solid #d8d6d4; }
.rail { grid-row: 1 / 3; border-right: 1px solid #d8d6d4; }
.rail button { width: 40px; height: 40px; }
.rail .on { border-left: 3px solid #f2c811; padding-right: 1px; }
.canvas { background: #fff; overflow: hidden; }
.report { display: flex; margin-right: 1px; height: 610px; border-bottom: 2px dotted #605e5c; }

/* Report cards */
.col-main { width: 493px; }
.card { position: relative; height: 88px; background: #afeae3; border: 1px solid #252423; box-shadow: 4px 6px 8px rgba(0,0,0,.35); display: flex; flex-direction: column; align-items: center; }
.card strong { font-family: "Inter", "DejaVu Sans", sans-serif; font-weight: 900; font-size: 31px; line-height: 36px; color: #000; margin-top: 37px; }
.card.selected { height: 91px; border: 2px solid #a19f9d; }
.selected h3 { font-family: "Inter", "DejaVu Sans", sans-serif; font-weight: 900; font-style: italic; font-size: 14px; line-height: 20px; color: #000; }
.selected strong { margin-top: 17px; }
.visual-head { position: absolute; right: -1px; bottom: 88px; display: flex; gap: 3px; color: #605e5c; }
.visual-head button { width: 24px; height: 23px; background: #fff; }
.h { position: absolute; width: 7px; height: 7px; border: 0 solid #8a8886; }
.nw { left: -1px; top: -1px; border-width: 2px 0 0 2px; }
.ne { right: -1px; top: -1px; border-width: 2px 2px 0 0; }
.sw { left: -1px; bottom: -1px; border-width: 0 0 2px 2px; }
.se { right: -1px; bottom: -1px; border-width: 0 2px 2px 0; }
.n, .s { left: calc(50% - 6px); width: 12px; border-top-width: 3px; height: 3px; }
.n { top: -1px; }
.s { bottom: -2px; }
.w, .e { top: calc(50% - 6px); height: 12px; width: 2px; border-left-width: 2px; }
.w { left: -1px; }
.e { right: -1px; }
.visual-title { font-family: "Inter", "DejaVu Sans", sans-serif; font-weight: 900; font-size: 16px; line-height: 20px; color: #000; text-align: center; }
.visual-title.large { font-size: 19px; margin: 22px 0 6px; }

/* Hierarchy slicers */
.scroller { display: flex; justify-content: space-between; height: 377px; overflow: hidden; padding: 0 5px 0 10px; }
.scroller .thumb { width: 7px; height: 270px; background: #d8d6d4; }
.checks { font-size: 11px; color: #605e5c; }
.checks li { display: flex; align-items: center; height: 16px; gap: 7px; white-space: nowrap; }
.checks li svg { width: 12px; height: 12px; color: #8a8886; }
.checks .leaf { padding-left: 19px; }
.checks label { display: flex; align-items: center; gap: 7px; line-height: 16px; }
.checks input { width: 11px; height: 11px; }
.col-costs { flex: 1; padding: 412px 0 0 10px; }
.col-costs .visual-title { width: 312px; margin-bottom: 6px; }
.col-slicers { width: 162px; padding: 22px 0 0 1px; }
.months, .years { display: grid; gap: 4px 2px; width: 137px; margin-left: 11px; }
.months { grid-template: repeat(6, 1fr) / 1fr 1fr; height: 232px; }
.years { grid-template: repeat(3, 68px) / repeat(3, 1fr); }
.months button, .years button { background: #eaeaea; color: #666; font-size: 10px; }
.months .on, .years .on { background: #333; color: #fff; font-weight: 600; }
.slicer-head { display: flex; align-items: center; justify-content: space-between; height: 27px; padding: 8px 4px 0 0; font-size: 10px; line-height: 18px; color: #000; }
.days { width: 82px; padding: 21px 0 0 18px; }

/* Filter pane */
.filters { background: #fff; border-left: 1px solid #c8c6c4; }
.filter-search { padding: 45px 12px 4px 8px; border-bottom: 1px solid #c8c6c4; }
.search { display: flex; align-items: center; gap: 10px; height: 31px; padding-left: 10px; border: 1px solid #c8c6c4; border-radius: 2px; background: #fff; color: #3b3a38; }
.search input { border: 0; background: none; padding: 0; width: 100%; }
.filters h3 { display: flex; align-items: center; justify-content: space-between; height: 16px; padding: 0 12px 0 8px; margin: 27px 0 8px; font-size: 12px; white-space: nowrap; color: #3b3a38; }
.filters .filter-search + h3 { margin: 17px 0 8px; }
.filters h3 svg { margin-top: 4px; }
.filter-card, .drop { height: 46px; margin: 0 8px 6px; border: 1px solid #c8c6c4; border-radius: 2px; line-height: 18px; padding: 4px 8px; white-space: nowrap; }
.drop { line-height: 46px; padding: 0; text-align: center; margin-bottom: 0; }

/* Visualizations pane */
.viz, .fieldpane { grid-row: 1 / 3; border-left: 1px solid #d8d6d4; min-height: 0; }
.viz { grid-column: 4; }
.pane-head { display: flex; align-items: center; justify-content: space-between; padding: 7px 8px 0; height: 32px; color: #3b3a38; }
.pane-head h2 { font-size: 15px; font-weight: 600; color: #252423; }
.sub { padding-left: 8px; line-height: 18px; margin-top: 5px; font-weight: 500; }
.modes { display: flex; gap: 34px; padding-left: 8px; margin-top: 2px; }
.modes button { width: 32px; height: 32px; }
.modes .on { background: #d2d0ce; border-radius: 2px; }
.pointer { width: 100%; height: 9px; margin-top: 4px; }
.gallery { display: grid; grid-template-columns: repeat(9, 28px); grid-auto-rows: 28px; padding: 8px 0 6px 6px; border-bottom: 1px solid #d8d6d4; }
.gallery svg { width: 18px; height: 18px; }
.gallery .on { margin: 2px; background: #d2d0ce; outline: 1px solid #605e5c; }
.g { fill: #c8c6c4; stroke: #797775; }
svg .w { fill: #fff; stroke: #3b3a38; }
.b { fill: #83bef0; stroke: #0063b1; }
.k { fill: none; stroke: #3b3a38; }
.o { fill: #f2a35e; stroke: #d9730d; }
.bl { fill: none; stroke: #0f78c8; stroke-width: 1.5px; }
.fk { fill: #3b3a38; }
.fb { fill: #83bef0; }
.t-blue { font-size: 14px; font-weight: 700; fill: #1a86c8; }
.t-blue.small { font-size: 8px; }
.t-bold { font-size: 9px; font-weight: 700; fill: #252423; }
.wells { padding: 8px 6px 0 4px; }
.wells h4 { padding-left: 8px; line-height: 18px; }
.wells .strong { font-weight: 600; color: #605e5c; margin: 9px 0 2px; }
.well { border: 1px dashed #c8c6c4; padding: 3px 2px 2px; margin-top: 4px; height: 31px; }
.pill, .drill { border: 1px solid #b3b0ad; border-radius: 2px; }
.pill { display: flex; align-items: center; justify-content: space-between; height: 24px; padding: 0 4px; background: #edebe9; }
.pill span, .drill span { display: flex; align-items: center; gap: 6px; color: #605e5c; }
.toggle { display: flex; align-items: center; justify-content: space-between; height: 27px; padding-left: 8px; }
.toggle input { position: relative; width: 32px; height: 16px; border-radius: 8px; border: 1px solid #605e5c; }
.toggle input::after { content: ""; position: absolute; left: 5px; top: 3px; width: 8px; height: 8px; border-radius: 4px; background: #605e5c; }
.toggle input:checked { background: #605e5c; }
.toggle input:checked::after { left: 18px; background: #fff; }
.toggle input:checked::before { content: ""; position: absolute; left: 8px; top: 2px; width: 4px; height: 8px; border: solid #fff; border-width: 0 2px 2px 0; transform: rotate(45deg); }
.well.tall { height: 57px; background: #fff; }
.drill { background: #fff; height: 43px; padding: 1px 7px 0 8px; line-height: 19px; }
.drill div { display: flex; justify-content: space-between; }
.drill span { gap: 9px; }

/* Fields pane */
.fieldpane { grid-column: 5; display: flex; flex-direction: column; }
.search.dark { border-color: #605e5c; height: 27px; margin: 13px 4px 8px; padding-left: 8px; gap: 6px; flex: none; }
.tree { display: flex; overflow: hidden; flex: 1; }
.tree ul { flex: 1; margin: -10px 0 0 5px; }
.tree li { display: flex; align-items: center; height: 24px; white-space: nowrap; color: #3b3a38; }
.tree li.on { background: #d2d0ce; }
.tree li > i { width: 33px; padding-left: 19px; color: #605e5c; }
.tree label { display: flex; align-items: center; }
.tree label input { width: 12px; height: 12px; border-color: #797775; border-radius: 2px; background: none; }
.tree label b { width: 26px; padding-left: 6px; }
.tree label b svg { width: 16px; height: 16px; }
.tree input:checked { background: #f2c811; border-color: #f2c811; position: relative; }
.tree input:checked::after { content: ""; position: absolute; left: 3px; top: 0; width: 4px; height: 7px; border: solid #605e5c; border-width: 0 1px 1px 0; transform: rotate(45deg); }
.tree .tbl { gap: 4px; padding-left: 4px; }
.tree .tbl > svg:first-child { color: #605e5c; }
.tree .thumb { width: 8px; height: 420px; margin: 339px 4px 0 1px; background: #c8c6c4; }

/* Page tabs */
.pages { grid-column: 2 / 4; grid-row: 2; display: flex; font-size: 11px; }
.pages > button { padding: 0 22px; border-right: 1px solid #c8c6c4; white-space: nowrap; }
.arrows { display: flex; width: 40px; justify-content: space-between; padding: 0 6px 0 5px; border-right: 1px solid #a19f9d; }
.pages > .on { background: #fff; font-weight: 600; border-bottom: 4px solid #f2c811; padding-top: 4px; }
.pages > .add { width: 39px; padding: 0; background: #f2c811; border: 0; margin: 2px 0 1px; }

/* Formula bar, floating over the report */
.formula { position: absolute; left: 45px; right: 622px; top: 4px; height: 28px; display: flex; gap: 4px; z-index: 2; }
.confirm { display: flex; width: 75px; background: #fff; border: 1px solid #c8c6c4; justify-content: center; gap: 14px; }
.editor { flex: 1; display: flex; align-items: center; background: #fff; border: 1px solid #979593; font: 11px/16px "Liberation Mono", monospace; white-space: pre; padding-bottom: 3px; }
.editor code { font: inherit; color: #000; }
.num { width: 17px; padding-left: 2px; color: #237893; }
.meas { color: #68349c; }
.fn { color: #3165bb; }
.col { color: #001080; }
.paren { outline: 1px solid #b9b9b9; background: #e2efe2; }
.cursor { width: 2px; height: 17px; background: #000; }
.minimap { width: 13px; height: 18px; margin-left: auto; background: linear-gradient(90deg, #a19f9d 50%, #ff5a5a 50%); border-top: 2px solid #252423; }
.editor button { margin: 4px 4px 0 5px; color: #605e5c; }

/* Status bar */
.status { display: flex; justify-content: space-between; align-items: center; padding: 0 17px 0 5px; font-size: 11px; color: #3b3a38; border-bottom: 1px solid #4a5866; }
.zoom { display: flex; align-items: center; gap: 4px; }
.zoom span { width: 45px; padding-left: 16px; color: #605e5c; margin-right: 13px; }
.zoom input { appearance: none; width: 100px; height: 14px; background: linear-gradient(#605e5c, #605e5c) center / 100% 1px no-repeat; }
.zoom input::-webkit-slider-thumb { appearance: none; width: 4px; height: 12px; background: #605e5c; }

/* Taskbar */
.taskbar { display: grid; grid-template-columns: 1fr auto 1fr; align-items: center; background: #dce4ef; font-size: 11px; }
.weather { display: flex; gap: 5px; padding-left: 20px; line-height: 16px; }
.weather small { font-size: 11px; color: #605e5c; }
.apps { display: flex; gap: 6px; padding-left: 2px; }
.apps button { position: relative; width: 38px; height: 40px; border-radius: 4px; }
.apps .run::after { content: ""; position: absolute; bottom: 0; left: 16px; width: 6px; height: 3px; border-radius: 2px; background: #7a7f87; }
.apps .active { background: #f0f4f9; }
.apps .run.active::after { left: 11px; width: 16px; background: #0f78d4; }
.tray { display: flex; justify-content: flex-end; align-items: center; gap: 8px; padding-right: 20px; }
.tray .lang { margin: 0 12px; }
.tray time { text-align: right; line-height: 16px; margin: 0 2px 0 9px; }
```
